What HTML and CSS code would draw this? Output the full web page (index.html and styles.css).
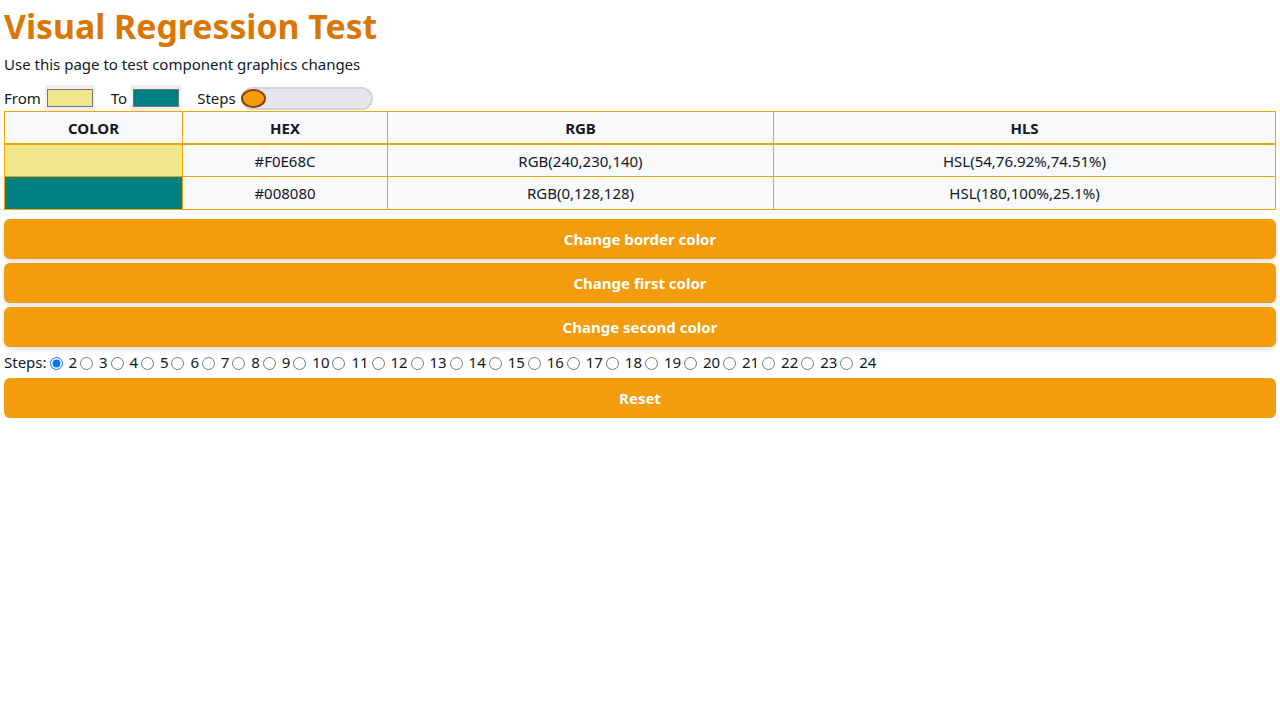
FILE: index.html
```html
<!DOCTYPE html>
<html>
<head>
<meta charset="utf-8">
<link rel="stylesheet" href="styles.css">
</head>
<body>
<h1 class="title">Visual Regression Test</h1>
<p class="subtitle">Use this page to test component graphics changes</p>
<div class="controls">
  <label class="ctl">From <span class="swatch-box"><span class="swatch khaki"></span></span></label>
  <label class="ctl">To <span class="swatch-box"><span class="swatch teal"></span></span></label>
  <label class="ctl">Steps <span class="slider"><span class="thumb"></span></span></label>
</div>
<table class="grid">
  <thead>
    <tr><th class="c1">COLOR</th><th class="c2">HEX</th><th class="c3">RGB</th><th>HLS</th></tr>
  </thead>
  <tbody>
    <tr><td class="khaki"></td><td>#F0E68C</td><td>RGB(240,230,140)</td><td>HSL(54,76.92%,74.51%)</td></tr>
    <tr class="last"><td class="teal"></td><td>#008080</td><td>RGB(0,128,128)</td><td>HSL(180,100%,25.1%)</td></tr>
  </tbody>
</table>
<div class="buttons">
  <button class="btn">Change border color</button>
  <button class="btn">Change first color</button>
  <button class="btn">Change second color</button>
</div>
<div class="steps">Steps:<label><input type="radio" name="s" checked> 2</label><label><input type="radio" name="s"> 3</label><label><input type="radio" name="s"> 4</label><label><input type="radio" name="s"> 5</label><label><input type="radio" name="s"> 6</label><label><input type="radio" name="s"> 7</label><label><input type="radio" name="s"> 8</label><label><input type="radio" name="s"> 9</label><label><input type="radio" name="s"> 10</label><label><input type="radio" name="s"> 11</label><label><input type="radio" name="s"> 12</label><label><input type="radio" name="s"> 13</label><label><input type="radio" name="s"> 14</label><label><input type="radio" name="s"> 15</label><label><input type="radio" name="s"> 16</label><label><input type="radio" name="s"> 17</label><label><input type="radio" name="s"> 18</label><label><input type="radio" name="s"> 19</label><label><input type="radio" name="s"> 20</label><label><input type="radio" name="s"> 21</label><label><input type="radio" name="s"> 22</label><label><input type="radio" name="s"> 23</label><label><input type="radio" name="s"> 24</label></div>
<button class="btn reset">Reset</button>
</body>
</html>
```
FILE: styles.css
```css
body {
  margin: 0;
  padding: 0 4px;
  font-family: "Noto Sans", "Open Sans", sans-serif;
  font-size: 15px;
  color: #111827;
  background: #fff;
}
.title {
  margin: 4px 0 0;
  font-size: 33.8px;
  line-height: 44px;
  font-weight: 700;
  color: #d97706;
}
.subtitle {
  margin: 6px 0 0;
  font-size: 15px;
  line-height: 20px;
}
.controls {
  display: flex;
  align-items: center;
  height: 27px;
  margin-top: 10px;
}
.ctl {
  display: flex;
  align-items: center;
  gap: 4px;
  margin-right: 16px;
}
.swatch-box {
  display: inline-flex;
  width: 50px;
  height: 26px;
  box-sizing: border-box;
  padding: 4px 2px;
  background: #efefef;
}
.swatch {
  flex: 1;
  border: 1px solid #767676;
}
.khaki { background: #f0e68c; }
.teal { background: #008080; }
.slider {
  display: inline-flex;
  align-items: center;
  width: 132px;
  height: 23px;
  box-sizing: border-box;
  border: 2px solid #d1d5db;
  border-radius: 12px;
  background: #e5e7eb;
  margin-top: 2px;
  margin-left: 1px;
}
.thumb {
  width: 25px;
  height: 19px;
  box-sizing: border-box;
  border: 2px solid #92400e;
  border-radius: 50%;
  background: #f59e0b;
  margin-left: -2px;
}
.grid {
  width: 100%;
  border-collapse: collapse;
  border: 1px solid #f0a500;
  background: #f8f9fa;
  font-size: 15px;
}
.grid th, .grid td {
  border: 1px solid #f0a500;
  text-align: center;
  padding: 0;
}
.grid th {
  height: 31px;
  font-weight: 700;
  border-top: none;
  border-bottom: 2px solid #f0a500;
}
.grid tbody td { height: 31px; }
.grid tbody .last td { height: 32px; }
.c1 { width: 177px; }
.c2 { width: 204px; }
.c3 { width: 385px; }
.buttons {
  display: flex;
  flex-direction: column;
  gap: 4px;
  margin-top: 9px;
}
.btn {
  display: block;
  width: 100%;
  height: 40px;
  border: none;
  border-radius: 6px;
  background: #f39c0c;
  color: #fff;
  font-family: inherit;
  font-size: 15px;
  font-weight: 700;
  box-shadow: 0 2px 5px rgba(0,0,0,0.15);
}
.steps {
  margin-top: 3px;
  height: 24px;
  line-height: 24px;
  font-size: 15px;
}
.steps input {
  margin: 0 2px 0 3px;
  vertical-align: -2px;
}
.reset {
  margin-top: 4px;
  box-shadow: none;
}
```
